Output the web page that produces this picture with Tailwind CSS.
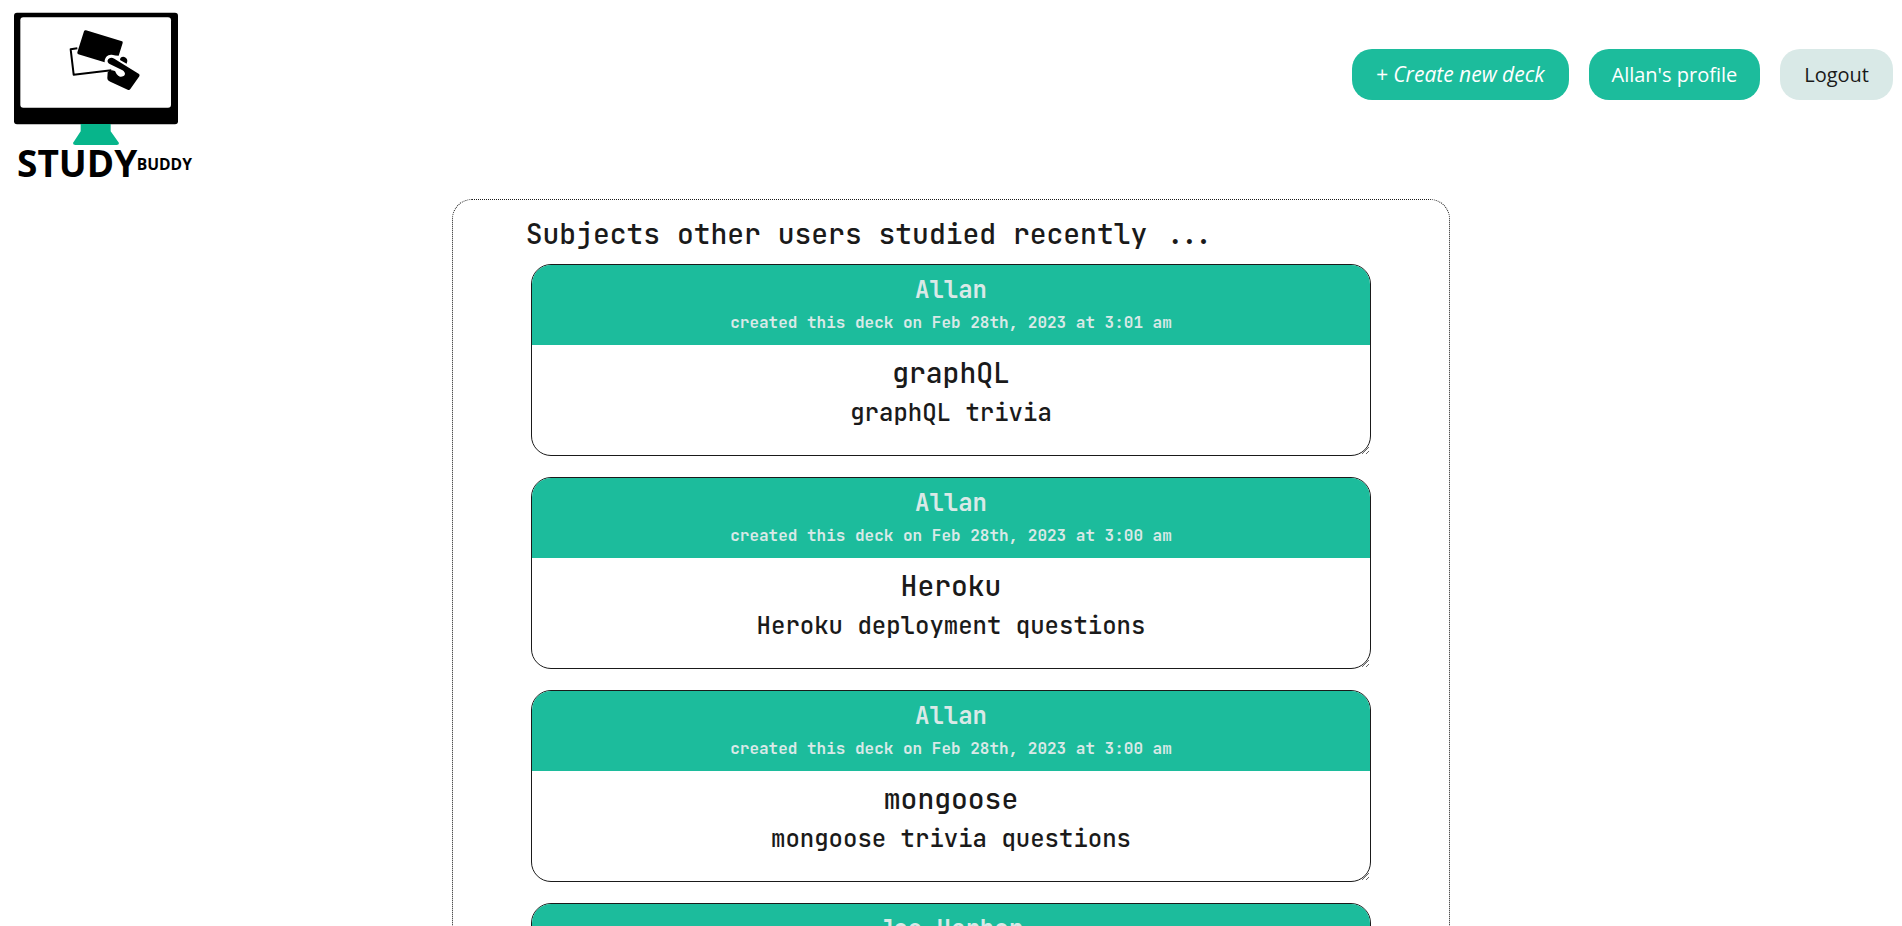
<!DOCTYPE html>
<html lang="en">
<head>
<meta charset="utf-8">
<meta name="viewport" content="width=device-width, initial-scale=1">
<title>Study Buddy</title>
<script src="https://cdn.jsdelivr.net/npm/@tailwindcss/browser@4"></script>
</head>
<body class="bg-white text-[#1a1a1a] font-['JetBrains_Mono','DejaVu_Sans_Mono',monospace]">
<header class="flex items-start justify-between pr-[9px] font-['Open_Sans',sans-serif]">
  <a href="#" aria-label="Study Buddy home" class="block">
    <svg class="block w-[210px] h-[190px]" viewBox="0 0 630 570">
      <rect x="42" y="38" width="492" height="335" rx="9"/>
      <rect x="61" y="52" width="452" height="271" rx="9" fill="#fff"/>
      <path d="M242 372H332V394L357 429Q357 435 350 435H226Q219 435 219 429L242 394Z" fill="#07b58b"/>
      <path d="M232 145L212 148L221 224L334 211" fill="none" stroke="#000" stroke-width="6" stroke-linejoin="round"/>
      <path d="M258 91L366 124Q369 125 368 129L356 167Q345 167 339 165C326 161 313 170 314 187L235 163Q231 161 232 157L252 94Q254 89 258 91Z"/>
      <path d="M360 180C360 168 376 167 381 178Q384 184 380 191Z"/>
      <path d="M323 181C326 172 336 171 343 176L417 222Q420 225 418 229L391 267Q388 272 383 269L331 245Q322 242 322 234L323 217Q326 212 336 211L345 213C350 224 358 234 369 229C380 224 374 214 366 210L329 192Q321 188 323 181Z"/>
      <text x="51" y="530" font-size="111" font-weight="700">STUDY</text>
      <text x="410" y="510" font-size="47" font-weight="700">BUDDY</text>
    </svg>
  </a>
  <nav class="flex gap-5 pt-[49px] text-xl leading-[27px]">
    <button type="button" class="rounded-[20px] bg-[#1cbc9c] px-6 py-3 text-[21px] italic text-white">+ Create new deck</button>
    <button type="button" class="rounded-[20px] bg-[#1cbc9c] px-[23px] py-3 text-white">Allan's profile</button>
    <button type="button" class="rounded-[20px] bg-[#d9e9e7] px-6 py-3">Logout</button>
  </nav>
</header>
<main class="mx-auto mt-[9px] w-[52.5%] rounded-[20px] border border-dotted border-[#1a1a1a] px-[78px] pt-[15px] pb-10">
  <h1 class="-ml-[5px] text-[28px] leading-[38px] font-medium">Subjects other users studied recently ...</h1>
  <div class="mt-[11px] flex flex-col gap-[21px] text-center">
    <article class="h-48 resize overflow-hidden rounded-[20px] border border-[#1a1a1a]">
      <header class="bg-[#1cbc9c] pt-[9px] pb-[9px] font-bold text-[#d9e9e7]">
        <h2 class="text-2xl leading-8">Allan</h2>
        <p class="pt-[3px] text-base leading-[27px]">created this deck on Feb 28th, 2023 at 3:01 am</p>
      </header>
      <h3 class="pt-[9px] text-[28px] leading-[38px] font-medium">graphQL</h3>
      <p class="pt-[5px] text-2xl leading-8 font-medium">graphQL trivia</p>
    </article>
    <article class="h-48 resize overflow-hidden rounded-[20px] border border-[#1a1a1a]">
      <header class="bg-[#1cbc9c] pt-[9px] pb-[9px] font-bold text-[#d9e9e7]">
        <h2 class="text-2xl leading-8">Allan</h2>
        <p class="pt-[3px] text-base leading-[27px]">created this deck on Feb 28th, 2023 at 3:00 am</p>
      </header>
      <h3 class="pt-[9px] text-[28px] leading-[38px] font-medium">Heroku</h3>
      <p class="pt-[5px] text-2xl leading-8 font-medium">Heroku deployment questions</p>
    </article>
    <article class="h-48 resize overflow-hidden rounded-[20px] border border-[#1a1a1a]">
      <header class="bg-[#1cbc9c] pt-[9px] pb-[9px] font-bold text-[#d9e9e7]">
        <h2 class="text-2xl leading-8">Allan</h2>
        <p class="pt-[3px] text-base leading-[27px]">created this deck on Feb 28th, 2023 at 3:00 am</p>
      </header>
      <h3 class="pt-[9px] text-[28px] leading-[38px] font-medium">mongoose</h3>
      <p class="pt-[5px] text-2xl leading-8 font-medium">mongoose trivia questions</p>
    </article>
    <article class="h-48 resize overflow-hidden rounded-[20px] border border-[#1a1a1a]">
      <header class="h-20 bg-[#1cbc9c] pt-[9px] font-bold text-[#d9e9e7]">
        <h2 class="text-2xl leading-8">Joe Harbor</h2>
      </header>
    </article>
  </div>
</main>
</body>
</html>
